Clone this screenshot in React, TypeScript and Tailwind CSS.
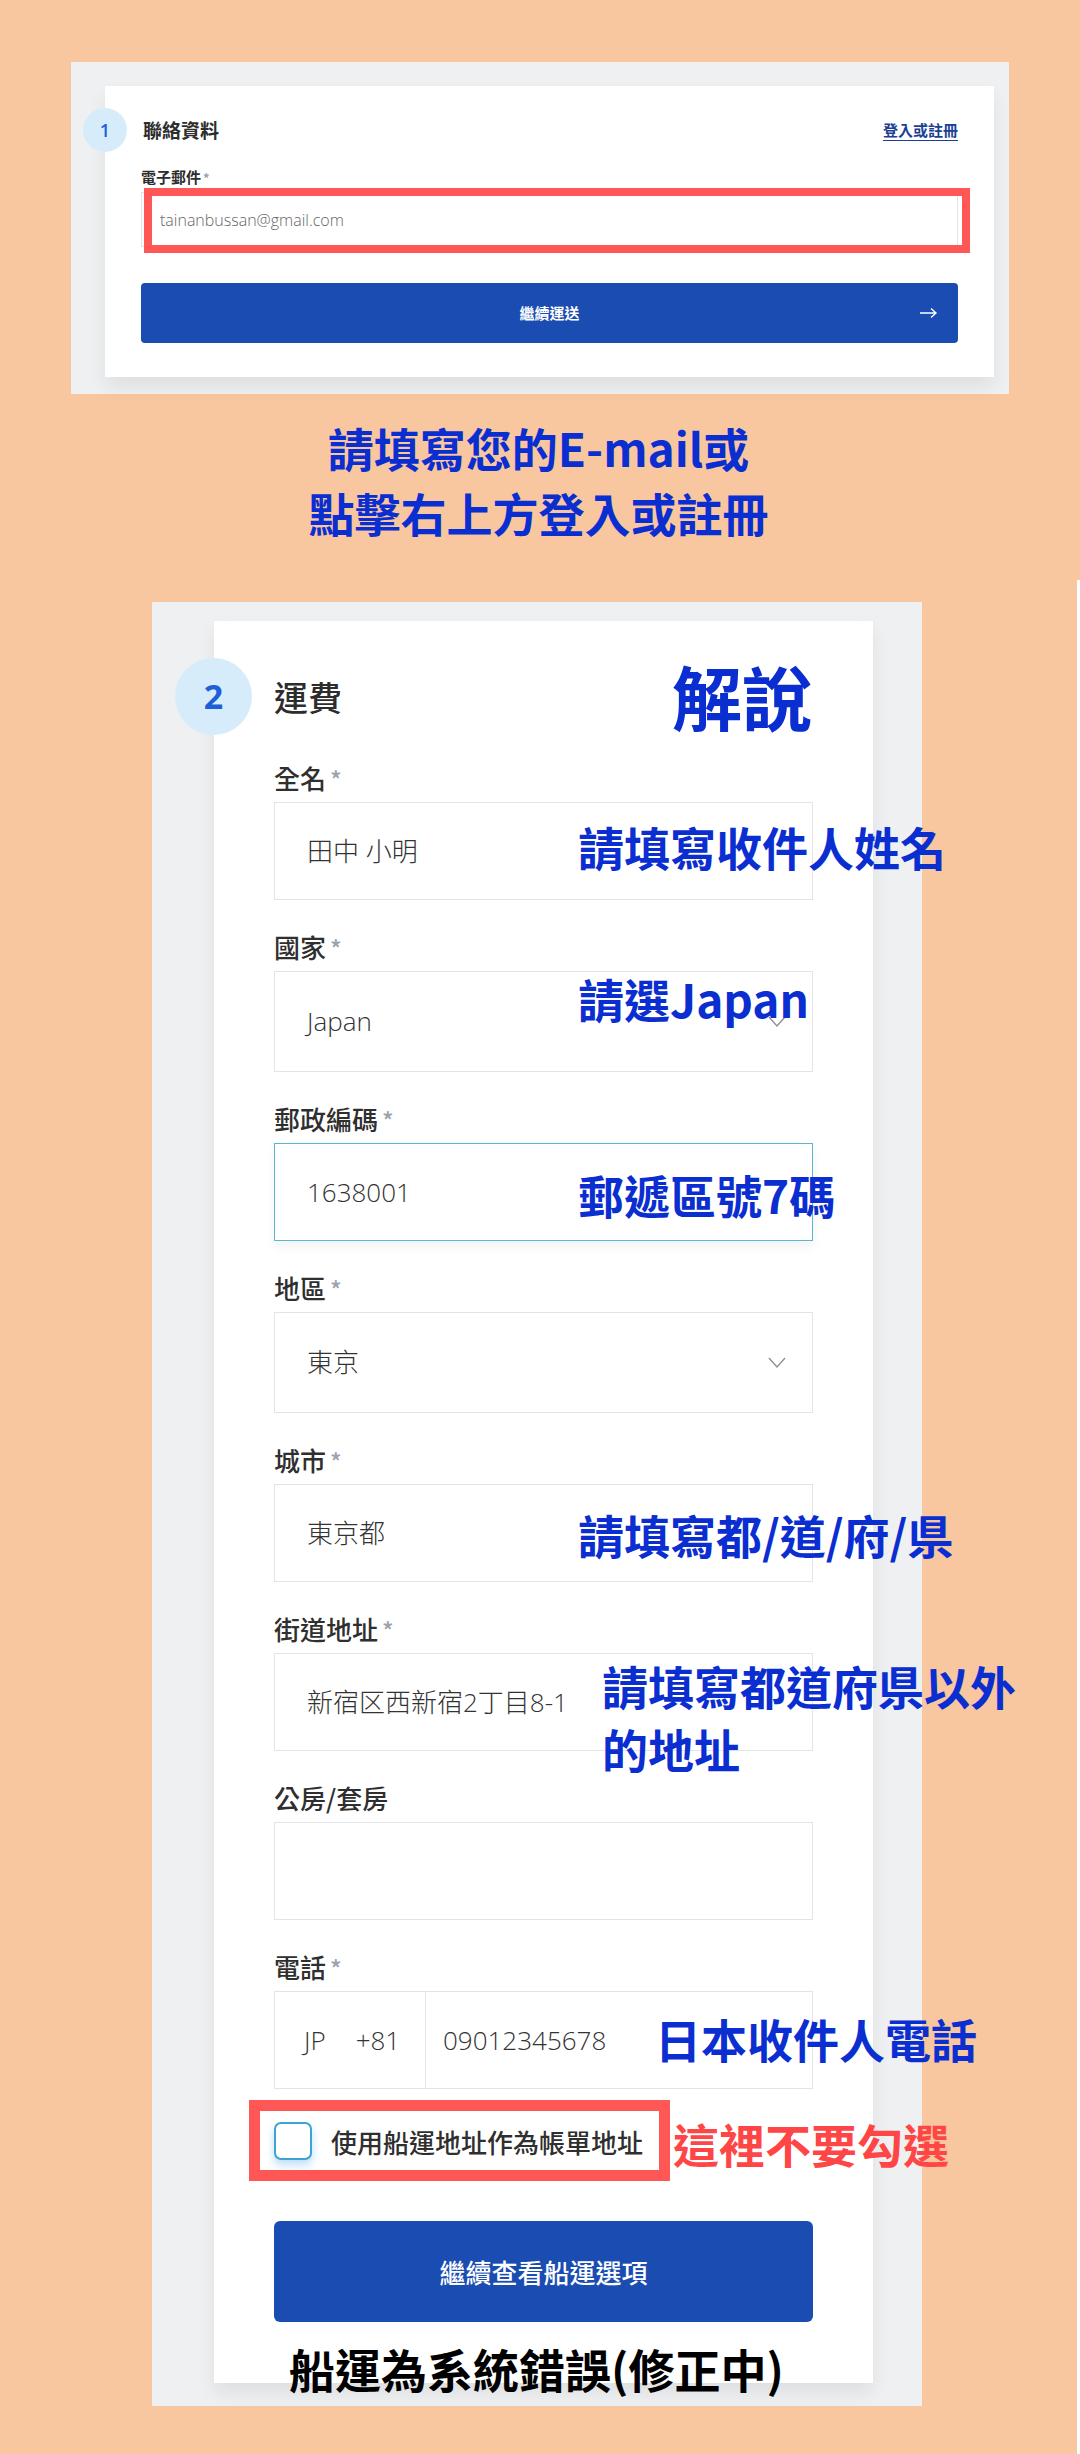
import React from "react";

const note = "pointer-events-none absolute whitespace-nowrap font-['Noto_Sans_CJK_TC',sans-serif] text-[46px] font-bold text-[#0b2ed0]";

function Label({ text, required = true }: { text: string; required?: boolean }) {
  return (
    <div className="h-[34px] text-[26px] font-medium leading-[34px] text-[#2f2f2f]">
      {text}
      {required && <span className="ml-[4px] text-[24px] text-[#9ba3ad]">*</span>}
    </div>
  );
}

function Chevron() {
  return (
    <svg width="18" height="11" viewBox="0 0 18 11" fill="none" className="absolute right-[26px]">
      <polyline points="1,1 9,10 17,1" stroke="#8a8f96" strokeWidth="1.3" />
    </svg>
  );
}

function Box({ children, tall = false, focus = false }: { children?: React.ReactNode; tall?: boolean; focus?: boolean }) {
  return (
    <div
      className={
        "relative mt-[7px] flex items-center bg-white pl-[32px] font-['Open_Sans','Noto_Sans_CJK_TC',sans-serif] text-[26px] font-light text-[#333] " +
        (tall ? "h-[101px] " : "h-[98px] ") +
        (focus
          ? "border-[1.5px] border-[#5ab6d4] shadow-[0_6px_10px_rgba(0,0,0,0.05)]"
          : "border border-[#e2e4e8]")
      }
    >
      {children}
    </div>
  );
}

export default function App() {
  return (
    <div className="flex min-h-[2454px] w-[1080px] bg-[#f8c69f] font-['Noto_Sans_CJK_TC',sans-serif]">
      <div className="w-[1077px]">
        {/* step 1 */}
        <div className="ml-[71px] mt-[62px] w-[938px] bg-[#eff0f2] pb-[17px] pl-[34px] pr-[15px] pt-[24px]">
          <div className="bg-white px-[36px] pb-[34px] pt-[22px] shadow-[0_10px_18px_rgba(0,0,0,0.07)]">
            <div className="flex h-[44px] items-center">
              <div className="-ml-[58px] flex h-[44px] w-[44px] items-center justify-center rounded-full bg-[#d6ecfb] font-['Open_Sans',sans-serif] text-[18px] font-semibold text-[#1e5fd8]">
                1
              </div>
              <div className="ml-[16px] text-[19px] font-bold text-[#2d2d2d]">聯絡資料</div>
              <div className="ml-auto text-[15px] font-bold text-[#1c3f94] underline underline-offset-[4px]">登入或註冊</div>
            </div>
            <div className="mt-[15px] h-[20px] text-[15px] font-bold leading-[20px] text-[#2d2d2d]">
              電子郵件<span className="ml-[2px] text-[13px] text-[#9ba3ad]">*</span>
            </div>
            <div className="relative mt-[5px] flex h-[55px] items-center border border-[#e2e4e8] bg-white pl-[18px] font-['Open_Sans',sans-serif] text-[16px] font-light text-[#666]">
              tainanbussan@gmail.com
              <div className="pointer-events-none absolute -bottom-[7px] -right-[13px] -top-[5px] left-[2px] border-[8px] border-[#ff5656]" />
            </div>
            <div className="relative mt-[36px] flex h-[60px] items-center justify-center rounded-[4px] bg-[#1a4cb1] text-[15px] font-bold text-white">
              繼續運送
              <svg width="19" height="12" viewBox="0 0 19 12" fill="none" className="absolute right-[20px]">
                <path d="M1 6h16M12 1.5 17 6l-5 4.5" stroke="white" strokeWidth="1.4" />
              </svg>
            </div>
          </div>
        </div>

        <div className="mt-[21px] text-center text-[46px] font-bold leading-[65px] text-[#0b2ed0]">
          <div>請填寫您的E-mail或</div>
          <div>點擊右上方登入或註冊</div>
        </div>

        {/* step 2 */}
        <div className="ml-[152px] mt-[57px] w-[770px] bg-[#eff0f2] pb-[23px] pl-[62px] pr-[49px] pt-[19px]">
          <div className="bg-white px-[60px] pt-[37px] shadow-[0_10px_18px_rgba(0,0,0,0.07)]">
            <div className="relative flex h-[77px] items-center">
              <div className="-ml-[99px] flex h-[77px] w-[77px] items-center justify-center rounded-full bg-[#d6ecfb] font-['Open_Sans',sans-serif] text-[34px] font-bold text-[#1e5fd8]">
                2
              </div>
              <div className="ml-[22px] text-[34px] font-medium text-[#2d2d2d]">運費</div>
              <div className={note + " left-[398px] top-[3px] text-[70px] leading-none"}>解說</div>
            </div>

            <div className="mt-[26px]">
              <Label text="全名" />
              <Box>
                田中 小明
                <div className={note + " left-[303px] top-[20px] leading-none"}>請填寫收件人姓名</div>
              </Box>
            </div>

            <div className="mt-[30px]">
              <Label text="國家" />
              <Box tall>
                Japan
                <Chevron />
                <div className={note + " left-[303px] top-[3px] leading-none"}>請選Japan</div>
              </Box>
            </div>

            <div className="mt-[30px]">
              <Label text="郵政編碼" />
              <Box focus>
                1638001
                <div className={note + " left-[303px] top-[27px] leading-none"}>郵遞區號7碼</div>
              </Box>
            </div>

            <div className="mt-[30px]">
              <Label text="地區" />
              <Box tall>
                東京
                <Chevron />
              </Box>
            </div>

            <div className="mt-[30px]">
              <Label text="城市" />
              <Box>
                東京都
                <div className={note + " left-[303px] top-[26px] leading-none"}>請填寫都/道/府/県</div>
              </Box>
            </div>

            <div className="mt-[30px]">
              <Label text="街道地址" />
              <Box>
                新宿区西新宿2丁目8-1
                <div className={note + " left-[327px] top-[0px] leading-[63px]"}>
                  <div>請填寫都道府県以外</div>
                  <div>的地址</div>
                </div>
              </Box>
            </div>

            <div className="mt-[30px]">
              <Label text="公房/套房" required={false} />
              <Box />
            </div>

            <div className="mt-[30px]">
              <Label text="電話" />
              <div className="relative mt-[7px] flex h-[98px] border border-[#e2e4e8] bg-white font-['Open_Sans',sans-serif] text-[26px] font-light text-[#333]">
                <div className="flex w-[151px] items-center gap-[30px] border-r border-[#e2e4e8] pl-[29px]">
                  <span>JP</span>
                  <span>+81</span>
                </div>
                <div className="flex items-center pl-[17px]">09012345678</div>
                <div className={note + " left-[380px] top-[23px] leading-none"}>日本收件人電話</div>
              </div>
            </div>

            <div className="relative mt-[33px] flex h-[38px] items-center">
              <div className="h-[38px] w-[38px] rounded-[7px] border-2 border-[#3ea2d2] bg-white shadow-[0_5px_9px_rgba(60,160,235,0.35)]" />
              <div className="ml-[19px] text-[26px] font-medium text-[#2f2f2f]">使用船運地址作為帳單地址</div>
              <div className="pointer-events-none absolute -left-[25px] -top-[22px] h-[81px] w-[421px] border-[11px] border-[#ff5656]" />
              <div className={note + " -top-[2px] left-[399px] leading-none text-[#ff4646]"}>這裡不要勾選</div>
            </div>

            <div className="mt-[61px] flex h-[101px] items-center justify-center rounded-[6px] bg-[#1a4cb1] text-[26px] font-medium text-white">
              繼續查看船運選項
            </div>

            <div className="relative z-10 ml-[15px] mt-[23px] h-[38px] whitespace-nowrap text-[46px] font-bold leading-[46px] text-black">
              船運為系統錯誤(修正中)
            </div>
          </div>
        </div>
      </div>
      <div className="mt-[580px] w-[3px] bg-white" />
    </div>
  );
}
